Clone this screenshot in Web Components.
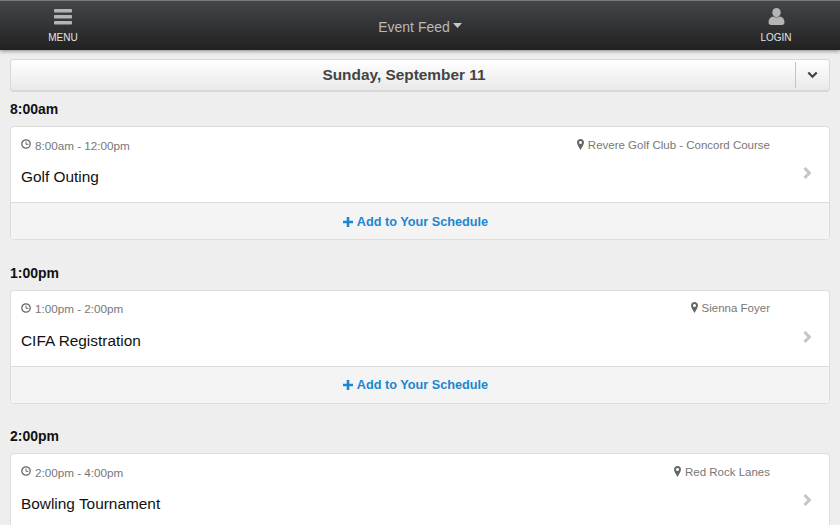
<!DOCTYPE html>
<html>
<head>
<meta charset="utf-8">
<title>Event Feed</title>
<style>
    html, body { margin: 0; height: 100%; overflow: hidden; background: #eeeeee; }
    body { font-family: "Liberation Sans", Arial, sans-serif; }
</style>
</head>
<body>
<app-navbar></app-navbar>
<day-picker>Sunday, September 11</day-picker>
<event-group time="8:00am">
    <event-card time="8:00am - 12:00pm" place="Revere Golf Club - Concord Course" name="Golf Outing"></event-card>
</event-group>
<event-group time="1:00pm">
    <event-card time="1:00pm - 2:00pm" place="Sienna Foyer" name="CIFA Registration"></event-card>
</event-group>
<event-group time="2:00pm">
    <event-card time="2:00pm - 4:00pm" place="Red Rock Lanes" name="Bowling Tournament" no-add></event-card>
</event-group>

<script>
class AppNavbar extends HTMLElement {
    constructor() {
        super();
        this.attachShadow({ mode: 'open' });
    }

    connectedCallback() {
        this.shadowRoot.innerHTML = `
            <style>
                :host {
                    display: block;
                    position: relative;
                    z-index: 5;
                }
                header {
                    display: grid;
                    grid-template-columns: 126px 1fr 128px;
                    height: 50px;
                    box-sizing: border-box;
                    border-top: 1px solid #77797c;
                    background: linear-gradient(#44464a, #212121);
                    box-shadow: 0 1px 4px rgba(0, 0, 0, 0.45);
                    color: #e4e4e4;
                }
                .side {
                    display: flex;
                    flex-direction: column;
                    align-items: center;
                    padding-top: 7px;
                    font-size: 10px;
                    line-height: 12px;
                }
                .side svg {
                    display: block;
                    margin-bottom: 7px;
                }
                .title {
                    display: flex;
                    justify-content: center;
                    align-items: center;
                    gap: 3px;
                    padding-left: 2px;
                    padding-top: 2px;
                    font-size: 14px;
                    color: #b9b9b9;
                }
                .title svg { margin-top: -3px; }
            </style>
            <header>
                <div class="side">
                    <svg width="18" height="17" viewBox="0 0 18 17">
                        <rect x="0" y="1" width="18" height="3.6" rx="0.8" fill="#b4b4b4"/>
                        <rect x="0" y="7" width="18" height="3.6" rx="0.8" fill="#b4b4b4"/>
                        <rect x="0" y="13" width="18" height="3.6" rx="0.8" fill="#b4b4b4"/>
                    </svg>
                    <span>MENU</span>
                </div>
                <div class="title">
                    <span>Event Feed</span>
                    <svg width="9" height="5" viewBox="0 0 9 5"><path d="M0 0H9L4.5 5Z" fill="#c8c8c8"/></svg>
                </div>
                <div class="side">
                    <svg width="17" height="17" viewBox="0 0 17 17">
                        <ellipse cx="8.5" cy="4.6" rx="4.2" ry="4.6" fill="#b4b4b4"/>
                        <path d="M0.5 14.5C0.5 11 2.5 9 5.5 8.6C7.3 9.9 9.7 9.9 11.5 8.6C14.5 9 16.5 11 16.5 14.5C16.5 16 15.5 17 14 17H3C1.500 17 0.500 16 0.500 14.500Z" fill="#b4b4b4"/>
                    </svg>
                    <span>LOGIN</span>
                </div>
            </header>
        `;
    }
}

class DayPicker extends HTMLElement {
    constructor() {
        super();
        this.attachShadow({ mode: 'open' });
    }

    connectedCallback() {
        this.shadowRoot.innerHTML = `
            <style>
                :host {
                    display: block;
                    margin: 9px 10px 0;
                }
                .box {
                    display: flex;
                    align-items: center;
                    height: 33px;
                    box-sizing: border-box;
                    border: 1px solid #d8d8d8;
                    border-bottom-width: 2px;
                    border-radius: 4px;
                    background: linear-gradient(#ffffff, #e9e9e9);
                }
                .label {
                    flex: 1;
                    padding-left: 2px;
                    text-align: center;
                    font-size: 15.400px;
                    font-weight: bold;
                    color: #444444;
                }
                .toggle {
                    display: flex;
                    justify-content: center;
                    align-items: center;
                    width: 33px;
                    height: 26px;
                    border-left: 1px solid #c4c4c4;
                }
            </style>
            <div class="box">
                <div class="label"><slot></slot></div>
                <div class="toggle">
                    <svg width="11" height="8" viewBox="0 0 11 8"><path d="M1.300 1.500L5.500 5.700L9.700 1.500" fill="none" stroke="#444444" stroke-width="2.300"/></svg>
                </div>
            </div>
        `;
    }
}

class EventGroup extends HTMLElement {
    constructor() {
        super();
        this.attachShadow({ mode: 'open' });
    }

    connectedCallback() {
        this.shadowRoot.innerHTML = `
            <style>
                :host {
                    display: block;
                    margin: 0 10px;
                    padding-bottom: 15.500px;
                }
                h2 {
                    margin: 0;
                    padding-top: 9px;
                    height: 25px;
                    font-size: 14px;
                    line-height: 17px;
                    font-weight: bold;
                    color: #111111;
                }
            </style>
            <h2>${this.getAttribute('time')}</h2>
            <slot></slot>
        `;
    }
}

class EventCard extends HTMLElement {
    constructor() {
        super();
        this.attachShadow({ mode: 'open' });
    }

    connectedCallback() {
        const addRow = this.hasAttribute('no-add') ? '' : `
                <div class="add">
                    <svg width="10" height="10" viewBox="0 0 10 10"><path d="M5 0V10M0 5H10" stroke="#1a87d0" stroke-width="2.600"/></svg>
                    <span>Add to Your Schedule</span>
                </div>`;

        this.shadowRoot.innerHTML = `
            <style>
                :host {
                    display: block;
                }
                .card {
                    border: 1px solid #dcdcdc;
                    border-radius: 4px;
                    background: #ffffff;
                    overflow: hidden;
                }
                .body {
                    position: relative;
                    height: 75px;
                    box-sizing: border-box;
                    padding: 10.500px 59px 0 10px;
                }
                .meta {
                    display: flex;
                    justify-content: space-between;
                    font-size: 11.700px;
                    line-height: 15px;
                    color: #777777;
                }
                .meta span {
                    display: flex;
                    align-items: center;
                }
                .meta svg { margin-right: 4px; margin-top: -2px; }
                .place { font-size: 11.500px; }
                .name {
                    margin-top: 14.500px;
                    font-size: 15.400px;
                    line-height: 20px;
                    color: #111111;
                }
                .chev {
                    position: absolute;
                    right: 18px;
                    top: 40px;
                }
                .add {
                    display: flex;
                    justify-content: center;
                    align-items: center;
                    gap: 4px;
                    height: 35px;
                    padding: 1px 9px 0 0;
                    border-top: 1px solid #dcdcdc;
                    background: #f4f4f4;
                    font-size: 12.700px;
                    font-weight: bold;
                    color: #1a87d0;
                }
            </style>
            <div class="card">
                <div class="body">
                    <div class="meta">
                        <span>
                            <svg width="10" height="10" viewBox="0 0 10 10"><circle cx="5" cy="5" r="4.200" fill="none" stroke="#666666" stroke-width="1.300"/><path d="M5 2.500V5.300H7.400" fill="none" stroke="#666666"/></svg>
                            ${this.getAttribute('time')}
                        </span>
                        <span class="place">
                            <svg width="7" height="11" viewBox="0 0 7 11"><path fill-rule="evenodd" d="M3.500 0C5.500 0 7 1.500 7 3.500C7 5.500 4.600 9 3.500 11C2.400 9 0 5.500 0 3.500C0 1.500 1.500 0 3.500 0ZM3.500 2C2.700 2 2 2.700 2 3.500C2 4.300 2.700 5 3.500 5C4.300 5 5 4.300 5 3.500C5 2.700 4.300 2 3.500 2Z" fill="#666666"/></svg>
                            ${this.getAttribute('place')}
                        </span>
                    </div>
                    <div class="name">${this.getAttribute('name')}</div>
                    <svg class="chev" width="8" height="12" viewBox="0 0 8 12"><path d="M1.500 1L6.300 6L1.500 11" fill="none" stroke="#c6c6c6" stroke-width="3"/></svg>
                </div>${addRow}
            </div>
        `;
    }
}

customElements.define('app-navbar', AppNavbar);
customElements.define('day-picker', DayPicker);
customElements.define('event-group', EventGroup);
customElements.define('event-card', EventCard);
</script>
</body>
</html>
